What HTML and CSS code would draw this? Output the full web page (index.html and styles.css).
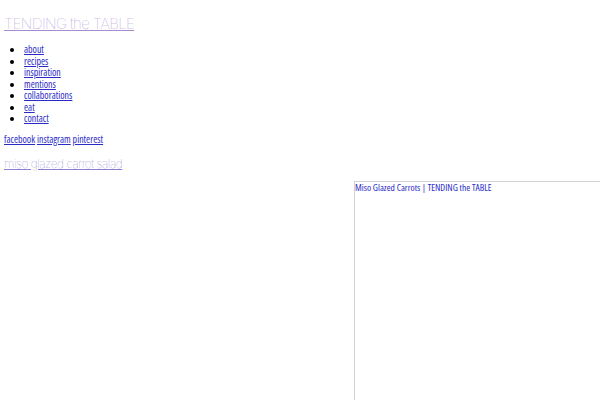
FILE: index.html
```html
<!DOCTYPE html>
<html>
<head>
<meta charset="utf-8">
<link rel="stylesheet" href="styles.css">
</head>
<body>
<header class="site-header">
  <a class="site-title" href="#">TENDING the TABLE</a>
</header>
<ul class="nav">
  <li><a href="#">about</a></li>
  <li><a href="#">recipes</a></li>
  <li><a href="#">inspiration</a></li>
  <li><a href="#">mentions</a></li>
  <li><a href="#">collaborations</a></li>
  <li><a href="#">eat</a></li>
  <li><a href="#">contact</a></li>
</ul>
<div class="social"><a href="#">facebook</a> <a href="#">instagram</a> <a href="#">pinterest</a></div>
<h2 class="post-title"><a href="#">miso glazed carrot salad</a></h2>
<div class="embed-row">
  <div class="embed"><a href="#">Miso Glazed Carrots | TENDING the TABLE</a></div>
</div>
</body>
</html>
```
FILE: styles.css
```css
html, body { margin: 0; padding: 0; background: #fff; overflow: hidden; }
body {
  padding: 0 4px;
  font-family: "Open Sans", "Noto Sans", sans-serif;
  font-stretch: 75%;
  font-size: 9.9px;
  color: #000;
  height: 400px;
  box-sizing: border-box;
}
a { color: #2a2ac8; }
.site-header { padding-top: 14px; height: 32px; box-sizing: border-box; }
.site-title {
  font-family: Inter, "DejaVu Sans", sans-serif;
  font-stretch: normal;
  font-weight: 100;
  font-size: 15px;
  letter-spacing: -0.6px;
  color: #a68ccf;
  text-decoration-color: #a68ccf;
}
.nav { margin: 12px 0 0; padding-left: 20px; line-height: 11.5px; }
.social { margin-top: 8px; line-height: 12px; }
.post-title {
  margin: 12px 0 0;
  font-family: Inter, "DejaVu Sans", sans-serif;
  font-stretch: normal;
  font-weight: 100;
  font-size: 12px;
  letter-spacing: -0.5px;
  line-height: 14px;
}
.post-title a { color: #8a80d2; }
.embed-row { padding-left: 350px; margin-top: 10px; margin-right: -4px; }
.embed {
  height: 300px;
  border-top: 1px solid #d4d4d4;
  border-left: 1px solid #d4d4d4;
  padding: 0 0 0 0;
  font-size: 9.5px;
  line-height: 11px;
}
.embed a { text-decoration: none; color: #2a2ac8; font-weight: 500; }
```
